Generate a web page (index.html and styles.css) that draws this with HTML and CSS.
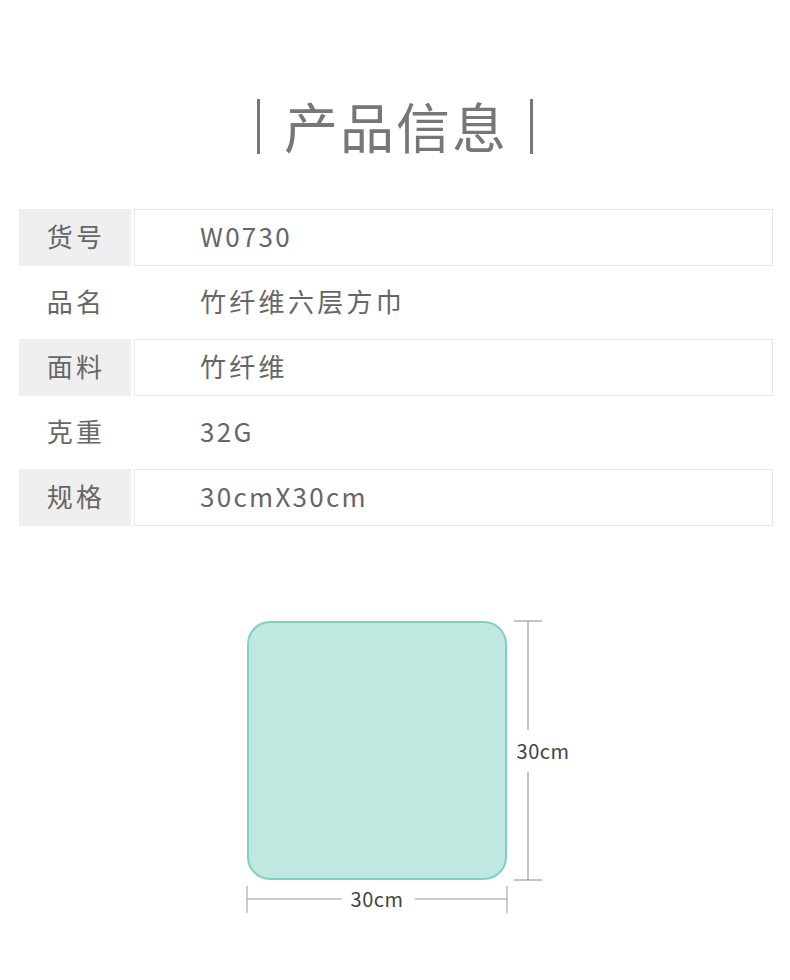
FILE: index.html
```html
<!DOCTYPE html>
<html lang="zh-CN">
<head>
    <meta charset="UTF-8">
    <meta name="viewport" content="width=device-width, initial-scale=1.0">
    <title>产品信息</title>
    <link rel="stylesheet" href="styles.css">
</head>
<body>
    <h1 class="title">
        <span class="bar"></span>
        <span class="title-text">产品信息</span>
        <span class="bar"></span>
    </h1>

    <div class="info">
        <div class="row shaded">
            <div class="label">货号</div>
            <div class="value num">W0730</div>
        </div>
        <div class="row">
            <div class="label">品名</div>
            <div class="value">竹纤维六层方巾</div>
        </div>
        <div class="row shaded">
            <div class="label">面料</div>
            <div class="value">竹纤维</div>
        </div>
        <div class="row">
            <div class="label">克重</div>
            <div class="value num">32G</div>
        </div>
        <div class="row shaded">
            <div class="label">规格</div>
            <div class="value num">30cmX30cm</div>
        </div>
    </div>

    <div class="diagram">
        <svg width="340" height="310" viewBox="0 0 340 310">
            <rect x="8" y="12" width="258" height="257" rx="22" ry="22" fill="#bfe8e0" stroke="#80d0c6" stroke-width="2"/>
            <!-- height -->
            <line x1="288" y1="11" x2="288" y2="120" stroke="#8a8a8a" stroke-width="1"/>
            <line x1="288" y1="162" x2="288" y2="270" stroke="#8a8a8a" stroke-width="1"/>
            <line x1="274" y1="11" x2="302" y2="11" stroke="#8a8a8a" stroke-width="1"/>
            <line x1="274" y1="270" x2="302" y2="270" stroke="#8a8a8a" stroke-width="1"/>
            <text x="303" y="149" class="dim">30cm</text>
            <!-- width -->
            <line x1="7" y1="289" x2="102" y2="289" stroke="#9a9a9a" stroke-width="1"/>
            <line x1="175" y1="289" x2="267" y2="289" stroke="#9a9a9a" stroke-width="1"/>
            <line x1="7" y1="276" x2="7" y2="303" stroke="#9a9a9a" stroke-width="1"/>
            <line x1="267" y1="276" x2="267" y2="303" stroke="#9a9a9a" stroke-width="1"/>
            <text x="137" y="297" class="dim">30cm</text>
        </svg>
    </div>
</body>
</html>
```

FILE: styles.css
```css
body {
    margin: 0;
    font-family: "Noto Sans CJK SC", "Noto Sans", sans-serif;
    color: #666;
    background: #fff;
}

.title {
    margin: 96px 0 0;
    height: 60px;
    display: flex;
    justify-content: center;
    align-items: center;
    gap: 24px;
    font-size: 54px;
    font-weight: 400;
    line-height: 60px;
    color: #777;
}

.title-text {
    letter-spacing: 2px;
    margin-right: -2px;
}

.bar {
    width: 3px;
    height: 55px;
    background: #777;
}

.info {
    margin-top: 53px;
    padding: 0 17px 0 19px;
    display: flex;
    flex-direction: column;
    gap: 8px;
}

.row {
    display: grid;
    grid-template-columns: 112px 1fr;
    gap: 3px;
    height: 57px;
}

.label, .value {
    display: flex;
    align-items: center;
    font-size: 26px;
    letter-spacing: 3.3px;
    padding-bottom: 4px;
    box-sizing: border-box;
}

.label {
    justify-content: center;
    padding-left: 2px;
}

.value {
    padding-left: 65px;
    border: 1px solid transparent;
}

.value.num {
    letter-spacing: 2.3px;
}

.shaded .label {
    background: #efefef;
}

.shaded .value {
    border-color: #e8e8e8;
}

.diagram {
    margin-top: 84px;
    padding-left: 240px;
}

.diagram svg {
    display: block;
}

.dim {
    font-family: "Noto Sans CJK SC", "Noto Sans", sans-serif;
    font-size: 20px;
    letter-spacing: 0.5px;
    fill: #444;
    text-anchor: middle;
}
```
